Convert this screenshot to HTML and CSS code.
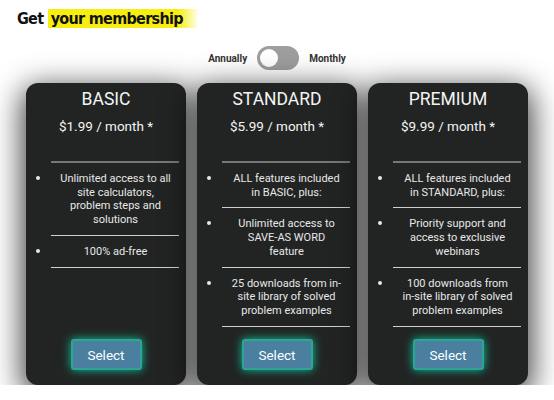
FILE: index.html
```html
<!DOCTYPE html>
<html lang="en">
<head>
    <meta charset="UTF-8">
    <meta name="viewport" content="width=device-width, initial-scale=1.0">
    <title>Membership</title>
    <link rel="stylesheet" href="styles.css">
</head>
<body>
    <h1 class="page-title">Get <span class="highlight">your membership</span></h1>

    <div class="billing">
        <span class="billing-label">Annually</span>
        <div class="switch"><span class="knob"></span></div>
        <span class="billing-label">Monthly</span>
    </div>

    <div class="plans">
        <div class="plan">
            <h2 class="plan-name">BASIC</h2>
            <div class="plan-price">$1.99 / month *</div>
            <ul class="features">
                <li>Unlimited access to all site calculators, problem steps and solutions</li>
                <li>100% ad-free</li>
            </ul>
            <button class="select-btn">Select</button>
        </div>
        <div class="plan">
            <h2 class="plan-name">STANDARD</h2>
            <div class="plan-price">$5.99 / month *</div>
            <ul class="features">
                <li>ALL features included in BASIC, plus:</li>
                <li>Unlimited access to SAVE-AS WORD feature</li>
                <li>25 downloads from in-site library of solved problem examples</li>
            </ul>
            <button class="select-btn">Select</button>
        </div>
        <div class="plan">
            <h2 class="plan-name">PREMIUM</h2>
            <div class="plan-price">$9.99 / month *</div>
            <ul class="features">
                <li>ALL features included in STANDARD, plus:</li>
                <li>Priority support and access to exclusive webinars</li>
                <li>100 downloads from in-site library of solved problem examples</li>
            </ul>
            <button class="select-btn">Select</button>
        </div>
    </div>
</body>
</html>
```

FILE: styles.css
```css
body {
    margin: 0;
    font-family: 'Roboto', 'Liberation Sans', sans-serif;
    background-color: #ffffff;
    color: #222;
}
.page-title {
    margin: 0;
    padding: 9px 0 0 17px;
    font-family: 'DejaVu Sans', sans-serif;
    font-stretch: condensed;
    font-weight: 900;
    font-size: 16px;
    letter-spacing: -0.7px;
    line-height: 20px;
    color: #111;
}
.highlight {
    padding: 0 16px 0 3px;
    background: linear-gradient(90deg, #f7ee10 0%, #f7ee10 86%, rgba(247, 238, 16, 0.45) 94%, rgba(247, 238, 16, 0) 100%);
}
.billing {
    display: flex;
    justify-content: center;
    align-items: center;
    gap: 10px;
    margin-top: 17px;
}
.billing-label {
    font-size: 10px;
    font-weight: bold;
    color: #333;
}
.switch {
    width: 42px;
    height: 24px;
    border-radius: 12px;
    background-color: #9e9e9e;
    display: flex;
    align-items: center;
    padding: 0 3px;
    box-sizing: border-box;
}
.knob {
    width: 18px;
    height: 18px;
    border-radius: 50%;
    background-color: #ffffff;
}
.plans {
    display: flex;
    justify-content: center;
    gap: 11px;
    margin-top: 13px;
}
.plan {
    width: 160px;
    height: 302px;
    box-sizing: border-box;
    padding: 6px 0 15px;
    background-color: #212423;
    border-radius: 12px;
    box-shadow: 0 8px 30px 4px rgba(0, 0, 0, 0.75);
    color: #f4f4f4;
    display: flex;
    flex-direction: column;
    text-align: center;
}
.plan-name {
    margin: 0;
    font-size: 17.5px;
    line-height: 20px;
    font-weight: normal;
}
.plan-price {
    margin-top: 9px;
    font-size: 13.5px;
    line-height: 16px;
    font-weight: normal;
}
.features {
    margin: 27px 7px 0 25px;
    padding: 0;
    border-top: 2px solid #777;
    font-size: 11px;
    line-height: 13.7px;
    color: #e8e8e8;
}
.features li {
    padding: 8px 8px 8px 9px;
    border-bottom: 1px solid #cfcfcf;
}
.features li::marker {
    font-size: 14px;
}
.select-btn {
    margin-top: auto;
    align-self: center;
    width: 71px;
    height: 31px;
    background-color: #4a7f9f;
    color: #ffffff;
    border: 2px solid #2ba596;
    border-radius: 3px;
    font-family: 'Roboto', sans-serif;
    font-size: 13.5px;
    box-shadow: 0 0 10px #12c29a;
    cursor: pointer;
}
```
